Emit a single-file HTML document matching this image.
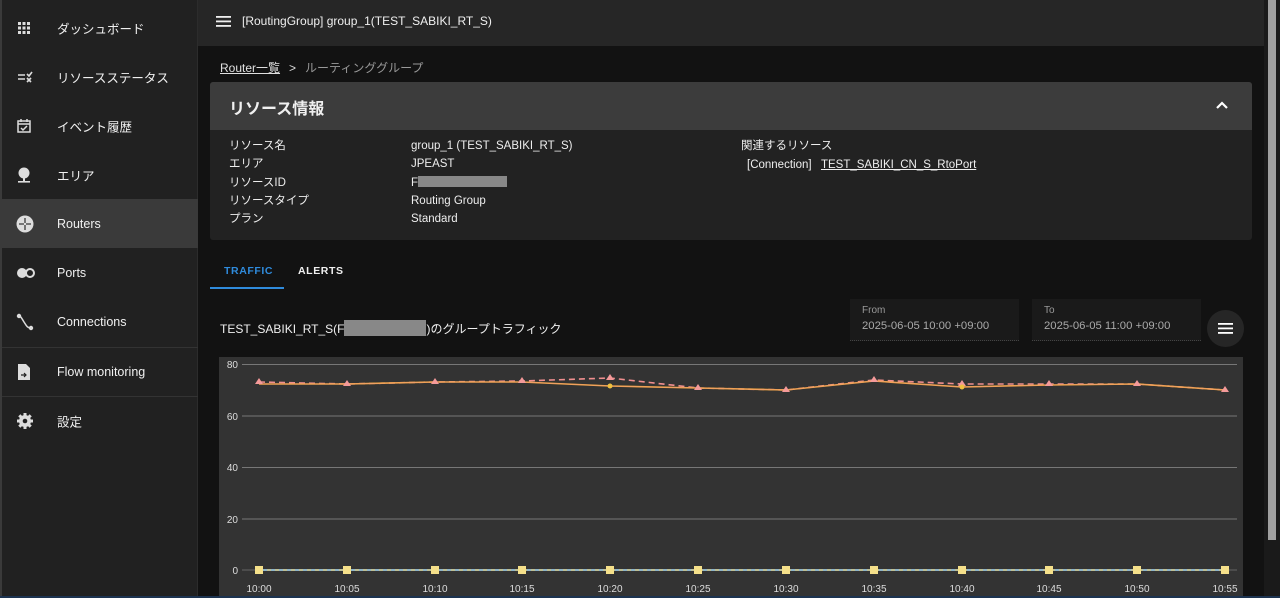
<!DOCTYPE html>
<html><head><meta charset="utf-8"><style>
*{margin:0;padding:0;box-sizing:border-box}
body{width:1280px;height:598px;overflow:hidden;background:#121212;font-family:"Liberation Sans","Noto Sans CJK JP",sans-serif;color:#eee;position:relative}
.a{position:absolute}
#side{left:0;top:0;width:198px;height:598px;background:#212121;border-left:2px solid #3a3a3a;border-right:1px solid #2c2c2c}
.it{position:absolute;left:0;width:196px;height:49px;font-size:12.5px;color:#f0f0f0}
.it span{position:absolute;left:55px;top:50%;transform:translateY(-50%);white-space:nowrap}
.it svg{position:absolute;left:14px;top:50%;transform:translateY(-50%)}
.sel{background:#3a3a3a}
.div{position:absolute;left:0;width:196px;height:1px;background:#333}
#hdr{left:198px;top:0;width:1066px;height:46px;background:#262626}
.lab{font-size:11.5px;color:#eee}
</style></head><body>
<div id="side" class="a">
 <div class="it" style="top:3px"><svg width="16" height="16" viewBox="0 0 16 16" fill="#ddd"><rect x="2" y="2" width="3" height="3"/><rect x="6.5" y="2" width="3" height="3"/><rect x="11" y="2" width="3" height="3"/><rect x="2" y="6.5" width="3" height="3"/><rect x="6.5" y="6.5" width="3" height="3"/><rect x="11" y="6.5" width="3" height="3"/><rect x="2" y="11" width="3" height="3"/><rect x="6.5" y="11" width="3" height="3"/><rect x="11" y="11" width="3" height="3"/></svg><span>ダッシュボード</span></div>
 <div class="it" style="top:52px"><svg width="18" height="16" viewBox="0 0 18 16" stroke="#ddd" stroke-width="1.6" fill="none"><path d="M2 6h7M2 10h7M11 5l2 2 3-4M11 9l4 4M15 9l-4 4"/></svg><span>リソースステータス</span></div>
 <div class="it" style="top:101px"><svg width="16" height="16" viewBox="0 0 16 16" stroke="#ddd" stroke-width="1.5" fill="none"><rect x="2" y="3" width="12" height="11"/><path d="M2 6h12M5 1v3M11 1v3M5 10l2 2 4-4"/></svg><span>イベント履歴</span></div>
 <div class="it" style="top:150px"><svg width="16" height="18" viewBox="0 0 16 18" fill="#ddd"><circle cx="8" cy="7" r="5.5"/><rect x="7" y="12" width="2" height="3"/><rect x="2" y="15" width="12" height="1.6"/></svg><span>エリア</span></div>
 <div class="it sel" style="top:199px"><svg width="18" height="18" viewBox="0 0 18 18"><circle cx="9" cy="9" r="8.5" fill="#ddd"/><path d="M9 3v5M9 10v5M3 9h5M10 9h5" stroke="#3a3a3a" stroke-width="1.3"/></svg><span>Routers</span></div>
 <div class="it" style="top:248px"><svg width="20" height="14" viewBox="0 0 20 14"><circle cx="6" cy="7" r="5" fill="#ddd"/><circle cx="14" cy="7" r="4" fill="none" stroke="#ddd" stroke-width="2"/></svg><span>Ports</span></div>
 <div class="it" style="top:297px"><svg width="18" height="18" viewBox="0 0 18 18" fill="#ddd"><circle cx="3" cy="3" r="2.2"/><circle cx="15" cy="15" r="2.2"/><path d="M3 3c2 0 3 3 5 6s3 6 7 6" stroke="#ddd" stroke-width="1.5" fill="none"/></svg><span>Connections</span></div>
 <div class="div" style="top:347px"></div>
 <div class="it" style="top:347px"><svg width="16" height="18" viewBox="0 0 16 18" fill="#ddd"><path d="M2 1h8l4 4v12H2z"/><path d="M5 12h5M8 10l2 2-2 2" stroke="#212121" stroke-width="1.2" fill="none"/></svg><span>Flow monitoring</span></div>
 <div class="div" style="top:396px"></div>
 <div class="it" style="top:396px"><svg width="18" height="18" viewBox="0 0 18 18"><circle cx="9" cy="9" r="6" fill="#ddd"/><path d="M9 1v16M1 9h16M3.3 3.3l11.4 11.4M14.7 3.3L3.3 14.7" stroke="#ddd" stroke-width="3"/><circle cx="9" cy="9" r="2.3" fill="#212121"/></svg><span>設定</span></div>
</div>
<div id="hdr" class="a">
 <svg class="a" style="left:18px;top:15px" width="16" height="13" viewBox="0 0 16 13" fill="#eee"><rect y="1" width="15" height="1.8"/><rect y="5.5" width="15" height="1.8"/><rect y="10" width="15" height="1.8"/></svg>
 <div class="a" style="left:44px;top:14px;font-size:12px;color:#f0f0f0">[RoutingGroup] group_1(TEST_SABIKI_RT_S)</div>
</div>
<div class="a" style="left:1264px;top:0;width:16px;height:598px;background:#1a1a1a"><div class="a" style="left:4px;top:0;width:8px;height:540px;background:#a0a0a0"></div></div>
<div class="a" style="left:220px;top:59px;font-size:12px"><span style="text-decoration:underline;color:#e0e0e0">Router一覧</span><span style="color:#ddd;margin:0 9px">&gt;</span><span style="color:#999">ルーティンググループ</span></div>
<div class="a" style="left:210px;top:82px;width:1042px;height:158px;background:#222;border-radius:3px;overflow:hidden">
 <div style="height:48px;background:#3c3c3c;position:relative"><div class="a" style="left:19px;top:13px;font-size:16px;font-weight:bold;color:#f0f0f0">リソース情報</div>
 <svg class="a" style="left:1005px;top:18px" width="14" height="10" viewBox="0 0 14 10"><path d="M2 8l5-5 5 5" stroke="#fff" stroke-width="2.2" fill="none"/></svg></div>
 <div class="a lab" style="left:19px;top:55px;line-height:18.3px">リソース名<br>エリア<br>リソースID<br>リソースタイプ<br>プラン</div>
 <div class="a lab" style="left:201px;top:55px;line-height:18.3px">group_1 (TEST_SABIKI_RT_S)<br>JPEAST<br>F<span style="display:inline-block;width:89px;height:11px;background:#888;vertical-align:-1px"></span><br>Routing Group<br>Standard</div>
 <div class="a lab" style="left:531px;top:55px">関連するリソース</div>
 <div class="a lab" style="left:537px;top:77px">[Connection]&nbsp;&nbsp; <span style="text-decoration:underline">TEST_SABIKI_CN_S_RtoPort</span></div>
</div>
<div class="a" style="left:224px;top:265px;font-size:10.5px;font-weight:bold;letter-spacing:.6px;color:#2f8bdc">TRAFFIC</div>
<div class="a" style="left:298px;top:265px;font-size:10.5px;font-weight:bold;letter-spacing:.6px;color:#f0f0f0">ALERTS</div>
<div class="a" style="left:210px;top:287px;width:74px;height:2px;background:#2f8bdc"></div>
<div class="a" style="left:220px;top:320px;font-size:12px;color:#f0f0f0">TEST_SABIKI_RT_S(F<span style="display:inline-block;width:82px;height:16px;background:#888;vertical-align:-3px"></span>)のグループトラフィック</div>
<div class="a" style="left:850px;top:299px;width:169px;height:42px;background:#1a1a1a;border-bottom:1px dotted #444"><div class="a" style="left:12px;top:6px;font-size:10px;color:#999">From</div><div class="a" style="left:12px;top:21px;font-size:11.3px;color:#aaa">2025-06-05 10:00 +09:00</div></div>
<div class="a" style="left:1032px;top:299px;width:169px;height:42px;background:#1a1a1a;border-bottom:1px dotted #444"><div class="a" style="left:12px;top:6px;font-size:10px;color:#999">To</div><div class="a" style="left:12px;top:21px;font-size:11.3px;color:#aaa">2025-06-05 11:00 +09:00</div></div>
<div class="a" style="left:1207px;top:310px;width:37px;height:37px;border-radius:50%;background:#262626"><svg class="a" style="left:11px;top:13px" width="15" height="12" viewBox="0 0 15 12" fill="#fff"><rect y="0" width="15" height="1.8"/><rect y="4.5" width="15" height="1.8"/><rect y="9" width="15" height="1.8"/></svg></div>
<svg class="a" style="left:0;top:0" width="1280" height="598">
 <rect x="219" y="357" width="1024" height="241" fill="#333"/>
 <g stroke="#777" stroke-width="1"><path d="M242 364.5H1237M242 416H1237M242 467.5H1237M242 519H1237"/></g>
 <path d="M242 570H1237" stroke="#666"/>
 <g font-size="10" fill="#ddd" text-anchor="end" font-family="Liberation Sans"><text x="238" y="368">80</text><text x="238" y="420">60</text><text x="238" y="471">40</text><text x="238" y="523">20</text><text x="238" y="574">0</text></g>
 <g font-size="10" fill="#ddd" text-anchor="middle" font-family="Liberation Sans">
 <text x="259" y="592">10:00</text><text x="347" y="592">10:05</text><text x="435" y="592">10:10</text><text x="522" y="592">10:15</text><text x="610" y="592">10:20</text><text x="698" y="592">10:25</text><text x="786" y="592">10:30</text><text x="874" y="592">10:35</text><text x="962" y="592">10:40</text><text x="1049" y="592">10:45</text><text x="1137" y="592">10:50</text><text x="1225" y="592">10:55</text></g>
 <path d="M259 570H1225" stroke="#8fb4c8" stroke-width="2"/>
 <path d="M259 570H1225" stroke="#e8c860" stroke-width="1" stroke-dasharray="4 4"/>
 <g fill="#f5e08a"><rect x="255" y="566" width="8" height="8"/><rect x="343" y="566" width="8" height="8"/><rect x="431" y="566" width="8" height="8"/><rect x="518" y="566" width="8" height="8"/><rect x="606" y="566" width="8" height="8"/><rect x="694" y="566" width="8" height="8"/><rect x="782" y="566" width="8" height="8"/><rect x="870" y="566" width="8" height="8"/><rect x="958" y="566" width="8" height="8"/><rect x="1045" y="566" width="8" height="8"/><rect x="1133" y="566" width="8" height="8"/><rect x="1221" y="566" width="8" height="8"/></g>
 <polyline points="259,382 347,384 435,382 522,381 610,378 698,388 786,390 874,380 962,384 1049,384 1137,384 1225,390" fill="none" stroke="#f08f8f" stroke-width="1.6" stroke-dasharray="6 4"/>
 <polyline points="259,384 347,384 435,382 522,382 610,386 698,388 786,390 874,381 962,387 1049,385 1137,384 1225,390" fill="none" stroke="#f0a830" stroke-width="1.6"/>
 <polyline points="259,384 347,384 435,382 522,382 610,386 698,388 786,390 874,381 962,387 1049,385 1137,384 1225,390" fill="none" stroke="#f09a8a" stroke-width="1" opacity=".6"/>
 <g fill="#f49a9a">
 <path d="M259 378l4 6h-8z"/><path d="M347 380l4 6h-8z"/><path d="M435 378l4 6h-8z"/><path d="M522 377l4 6h-8z"/><path d="M610 374l4 6h-8z"/><path d="M698 384l4 6h-8z"/><path d="M786 386l4 6h-8z"/><path d="M874 376l4 6h-8z"/><path d="M962 380l4 6h-8z"/><path d="M1049 380l4 6h-8z"/><path d="M1137 380l4 6h-8z"/><path d="M1225 386l4 6h-8z"/></g>
 <g fill="#f0c040"><circle cx="610" cy="386" r="2.5"/><circle cx="962" cy="387" r="2.5"/></g>
 <rect x="0" y="596" width="1280" height="2" fill="#1c3350"/>
</svg>
</body></html>
